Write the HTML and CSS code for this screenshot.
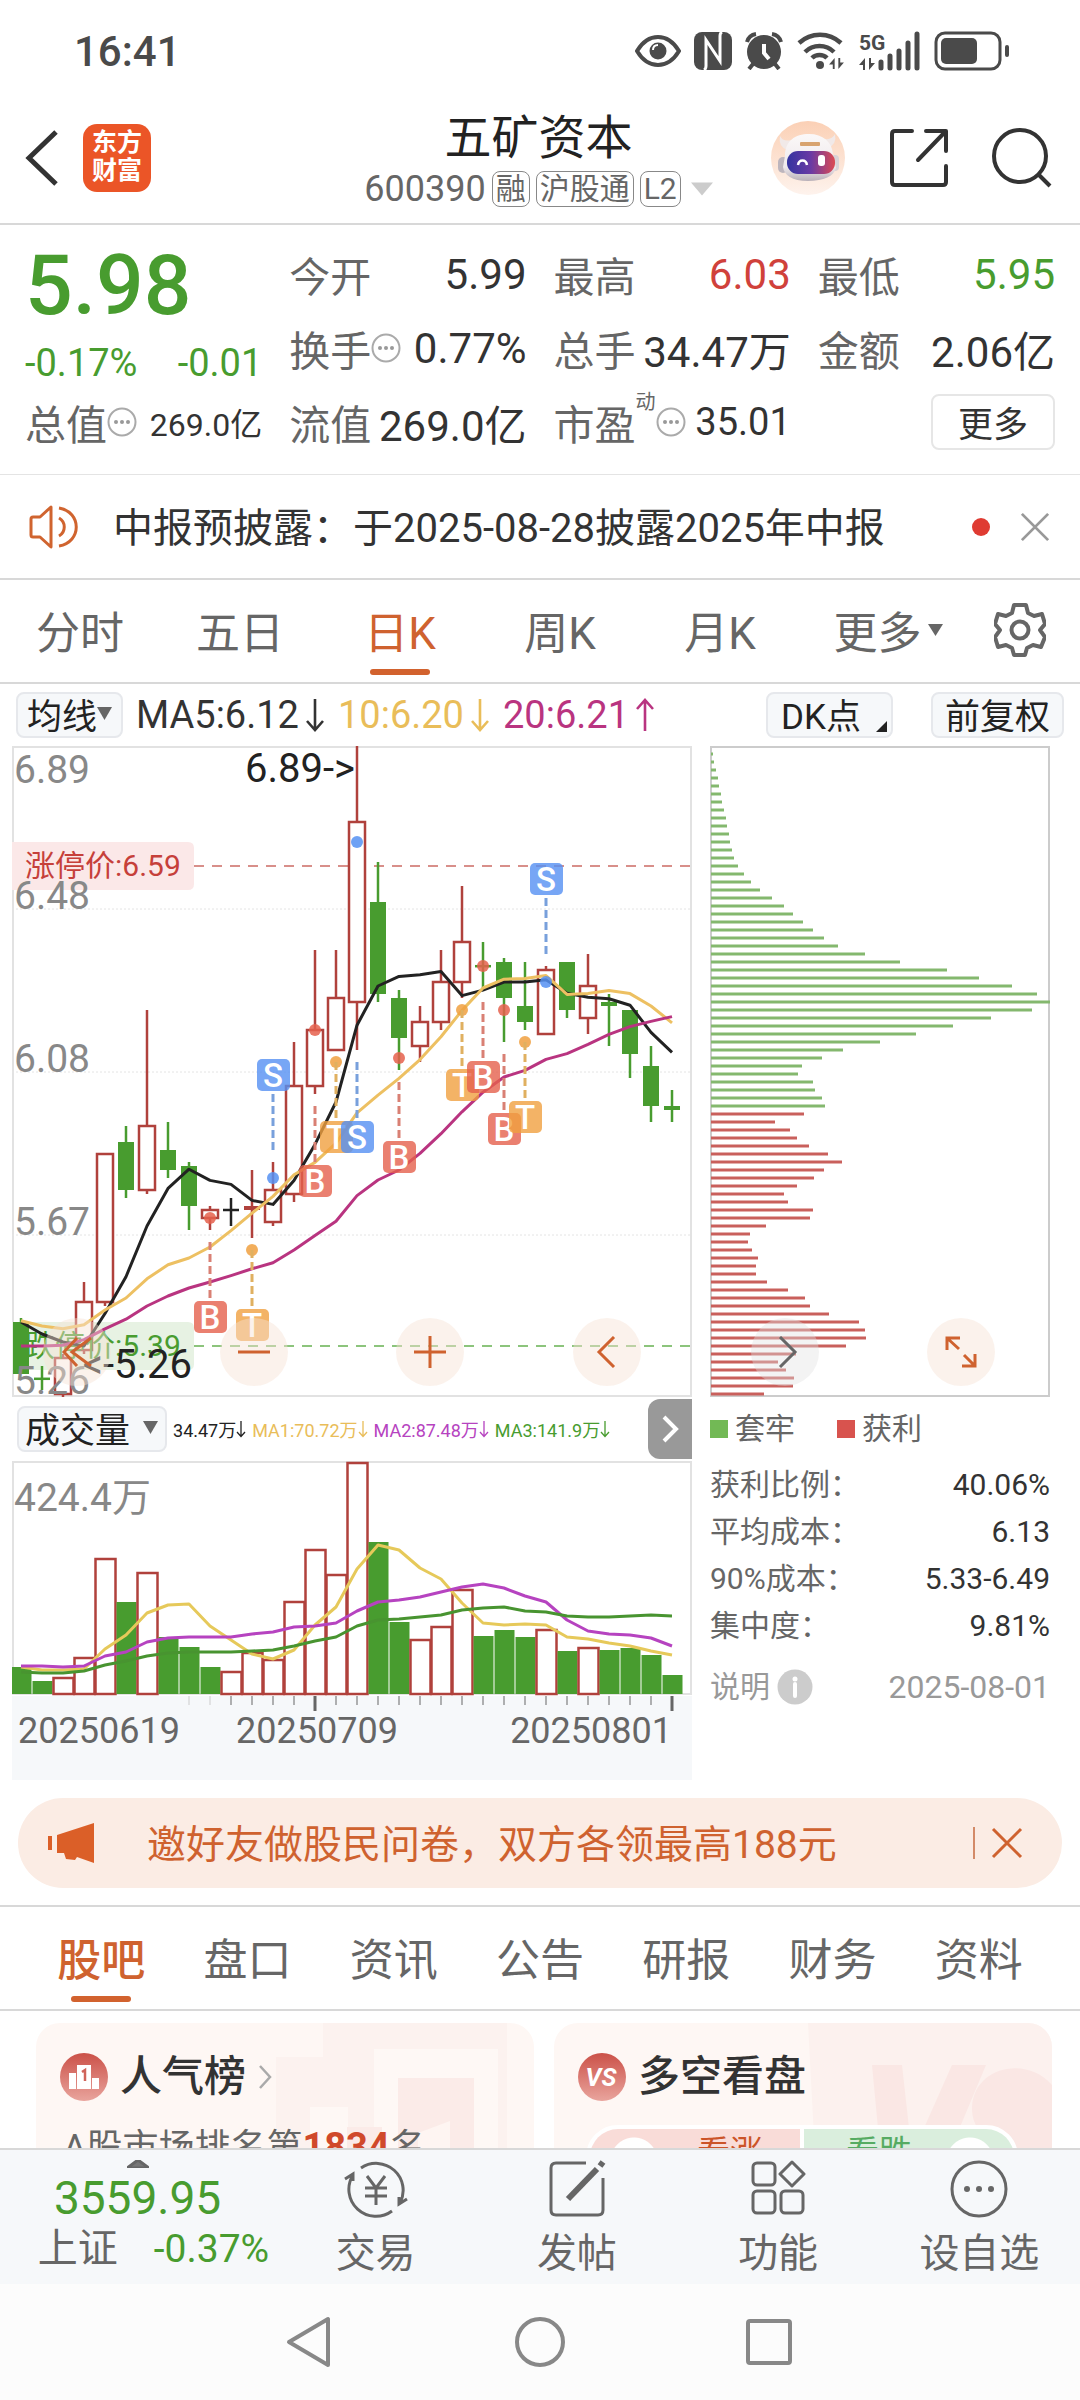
FILE: index.html
```html
<!DOCTYPE html>
<html lang="zh-CN">
<head>
  <meta charset="UTF-8" />
  <meta name="viewport" content="width=device-width, initial-scale=1" />
  <title>五矿资本 600390</title>
  <link rel="stylesheet" href="styles.css">
</head>
<body>

<svg class="defs" width="0" height="0" aria-hidden="true">
  <symbol id="dots" viewBox="0 0 30 30">
    <circle cx="15" cy="15" r="13.5" fill="none" stroke="#aaa" stroke-width="2" />
    <g fill="#999"><circle cx="9" cy="15" r="2" /><circle cx="15" cy="15" r="2" /><circle cx="21" cy="15" r="2" /></g>
  </symbol>
  <symbol id="down" viewBox="0 0 20 34">
    <path d="M10 1v31M2 23l8 9 8-9" fill="none" stroke="currentColor" stroke-width="2.6" />
  </symbol>
  <symbol id="up" viewBox="0 0 20 34">
    <path d="M10 33V2M2 11l8-9 8 9" fill="none" stroke="currentColor" stroke-width="2.6" />
  </symbol>
  <symbol id="close" viewBox="0 0 32 32">
    <path d="M2 2l28 28M30 2L2 30" fill="none" stroke="currentColor" stroke-width="3" />
  </symbol>
  <symbol id="updown" viewBox="0 0 16 14">
    <path d="M6 13V1L0 8h4v5zM10 1v12l6-7h-4V1z" fill="#4a4a4a" />
  </symbol>
</svg>

<div class="screen">

  <!-- Phone status bar -->
  <div class="status">
    <span class="clock">16:41</span>
    <div class="status-icons">
      <svg width="46" height="32" viewBox="0 0 46 32">
        <path d="M2 16C8 6 15 2 23 2s15 4 21 14c-6 10-13 14-21 14S8 26 2 16z" fill="none" stroke="#4a4a4a" stroke-width="4" />
        <circle cx="23" cy="16" r="8.5" fill="#4a4a4a" />
        <path d="M18 15c0-3 2-5 5-5" stroke="#fff" stroke-width="2" fill="none" />
      </svg>
      <svg width="38" height="38" viewBox="0 0 38 38">
        <rect width="38" height="38" rx="8" fill="#4a4a4a" />
        <path d="M10 38c2-1 2-2 2-4V8l14 21V8M28 0c-2 1-2 2-2 4v6M12 12v22M26 29L12 8" fill="none" stroke="#fff" stroke-width="3" />
      </svg>
      <svg width="38" height="38" viewBox="0 0 38 38">
        <circle cx="19" cy="20" r="17" fill="#4a4a4a" />
        <path d="M2 10q2-7 9-8M36 10q-2-7-9-8M8 32l-4 5M30 32l4 5" fill="none" stroke="#4a4a4a" stroke-width="4" />
        <path d="M19 12v9l5 6" fill="none" stroke="#fff" stroke-width="4" />
      </svg>
      <svg width="50" height="38" viewBox="0 0 50 38">
        <path d="M3 11c12-11 30-11 42 0M9 20c8-8 21-8 29 0M16 26c4-4 11-4 15 0" fill="none" stroke="#4a4a4a" stroke-width="4.5" />
        <circle cx="24" cy="33" r="4" fill="#4a4a4a" />
        <use href="#updown" x="33" y="25" width="15" height="13" />
      </svg>
      <svg width="62" height="40" viewBox="0 0 62 40">
        <text x="0" y="19" class="net">5G</text>
        <use href="#updown" x="0" y="26" width="16" height="14" />
        <path d="M22 37v-6M31 37V25M40 37V20M49 37V12M58 37V3" stroke="#4a4a4a" stroke-width="5" stroke-linecap="round" />
      </svg>
      <svg width="76" height="40" viewBox="0 0 76 40">
        <rect x="2" y="2" width="64" height="36" rx="9" fill="none" stroke="#4a4a4a" stroke-width="3" />
        <rect x="7" y="7" width="36" height="26" rx="5" fill="#4a4a4a" />
        <path d="M73 16v8" stroke="#4a4a4a" stroke-width="4" stroke-linecap="round" />
      </svg>
    </div>
  </div>

  <header class="header">
    <div class="header-left">
      <button class="icon-btn" aria-label="返回">
        <svg width="34" height="56" viewBox="0 0 34 56"><path d="M31 2L4 28l27 26" fill="none" stroke="#333" stroke-width="5" /></svg>
      </button>
      <a class="logo" href="#">东方<br />财富</a>
    </div>
    <div class="title">
      <h1>五矿资本</h1>
      <div class="code">600390 <span class="tag">融</span> <span class="tag">沪股通</span> <span class="tag">L2</span>
        <svg width="22" height="14" viewBox="0 0 24 14"><path d="M0 0h24L12 14z" fill="#ccc" /></svg>
      </div>
    </div>
    <div class="header-right">
      <button class="icon-btn" aria-label="智能助手">
        <svg width="76" height="76" viewBox="0 0 76 76">
          <defs>
            <linearGradient id="halo" x1="0" y1="0" x2="0" y2="1"><stop offset="0" stop-color="#fbd0b5" /><stop offset="1" stop-color="#fef3ed" /></linearGradient>
            <linearGradient id="shell" x1="0" y1="0" x2="0" y2="1"><stop offset="0" stop-color="#fbf8f8" /><stop offset=".7" stop-color="#efeaed" /><stop offset="1" stop-color="#b9b0b8" /></linearGradient>
            <linearGradient id="visor"><stop offset="0" stop-color="#3434a0" /><stop offset=".5" stop-color="#6a3aa4" /><stop offset="1" stop-color="#dc4a52" /></linearGradient>
          </defs>
          <circle cx="38" cy="38" r="37" fill="url(#halo)" />
          <path d="M17 30q-9-4-7-14 3 6 11 4zM58 28q9-4 7-14-3 6-10 5z" fill="#f1e9e8" />
          <rect x="8" y="37" width="10" height="16" rx="5" fill="#bdb5bd" />
          <rect x="60" y="35" width="9" height="16" rx="4" fill="#d9d2d6" />
          <path d="M15 36c0-15 10-22 24-22s23 8 24 20l3 14c-2 8-12 13-28 13S14 55 13 47z" fill="url(#shell)" />
          <rect x="17" y="31" width="48" height="23" rx="11" fill="url(#visor)" />
          <rect x="30" y="22" width="20" height="4" rx="1" fill="#d8a36f" />
          <path d="M28 45c1-6 8-6 9 0" fill="none" stroke="#fff" stroke-width="2.5" />
          <rect x="48" y="35" width="7" height="11" rx="3" fill="#fff" />
        </svg>
      </button>
      <button class="icon-btn" aria-label="分享">
        <svg width="60" height="60" viewBox="0 0 60 60"><path d="M23 3H6Q3 3 3 6v48q0 3 3 3h48q3 0 3-3V38M37 3h20v20M56 4L29 32" fill="none" stroke="#333" stroke-width="4" stroke-linejoin="round" stroke-linecap="round" /></svg>
      </button>
      <button class="icon-btn" aria-label="搜索">
        <svg width="60" height="60" viewBox="0 0 60 60"><circle cx="28" cy="28" r="26" fill="none" stroke="#333" stroke-width="4" /><path d="M46 46l12 12" stroke="#333" stroke-width="4" /></svg>
      </button>
    </div>
  </header>

  <main class="content">

    <!-- Quote numbers -->
    <section class="quote">
      <div class="price">
        <strong>5.98</strong>
        <div class="change"><span>-0.17%</span><span>-0.01</span></div>
      </div>
      <div class="cell"><span>今开</span><b>5.99</b></div>
      <div class="cell"><span>最高</span><b class="red">6.03</b></div>
      <div class="cell"><span>最低</span><b class="green">5.95</b></div>
      <div class="cell"><span>换手<svg class="hint"><use href="#dots" /></svg></span><b>0.77%</b></div>
      <div class="cell"><span>总手</span><b>34.47万</b></div>
      <div class="cell"><span>金额</span><b>2.06亿</b></div>
      <div class="cell"><span>总值<svg class="hint"><use href="#dots" /></svg></span><b class="small">269.0亿</b></div>
      <div class="cell"><span>流值</span><b>269.0亿</b></div>
      <div class="cell"><span>市盈<sup>动</sup><svg class="hint"><use href="#dots" /></svg></span><b class="mid">35.01</b></div>
      <div class="cell end"><button class="more">更多</button></div>
    </section>

    <section class="notice">
      <svg width="52" height="44" viewBox="0 0 52 44">
        <path d="M22 2L11 12H4q-2 0-2 2v16q0 2 2 2h7l11 10z" fill="none" stroke="#d0642f" stroke-width="3" stroke-linejoin="round" />
        <path d="M30 13c7 4 7 14 0 18M30 3c23 4 23 34 0 38" fill="none" stroke="#d0642f" stroke-width="3" />
      </svg>
      <a href="#">中报预披露：于2025-08-28披露2025年中报</a>
      <i class="dot"></i>
      <button class="icon-btn grey" aria-label="关闭公告"><svg width="30" height="30"><use href="#close" /></svg></button>
    </section>

    <nav class="period">
      <button>分时</button>
      <button>五日</button>
      <button class="active">日K</button>
      <button>周K</button>
      <button>月K</button>
      <button class="drop">更多<svg width="15" height="12" viewBox="0 0 15 12"><path d="M0 0h15L7.500 12z" fill="#666" /></svg></button>
      <button aria-label="设置">
        <svg width="52" height="54" viewBox="0 0 52 54">
          <path d="M20 2h12l2 8 6 3 8-2 3 10-5 6 5 7-4 10-8-2-6 3-2 7H20l-2-7-6-3-8 2L1 34l5-7-5-6 3-10 8 2 6-3z" fill="none" stroke="#666" stroke-width="4" stroke-linejoin="round" />
          <circle cx="26" cy="27" r="8.500" fill="none" stroke="#666" stroke-width="4" />
        </svg>
      </button>
    </nav>

    <div class="indicator">
      <button class="chip">均线<svg width="15" height="13" viewBox="0 0 15 13"><path d="M0 0h15L7.500 13z" fill="#666" /></svg></button>
      <span>MA5:6.12<svg class="arrow"><use href="#down" /></svg></span>
      <span class="yellow">10:6.20<svg class="arrow"><use href="#down" /></svg></span>
      <span class="magenta">20:6.21<svg class="arrow"><use href="#up" /></svg></span>
      <button class="chip push">DK点<svg class="corner" width="11" height="11" viewBox="0 0 11 11"><path d="M11 0v11H0z" fill="#222" /></svg></button>
      <button class="chip gap">前复权</button>
    </div>

    <section class="charts">
      <div class="left">
        <div class="plot">
          <svg id="kline" viewBox="0 0 680 651"></svg>
          <div class="tools">
            <button aria-label="最早"><svg viewBox="0 0 32 32"><path d="M16 2L3 16l13 14M30 2L11 16l19 14" /></svg></button>
            <button aria-label="缩小"><svg viewBox="0 0 32 32"><path d="M0 16h32" /></svg></button>
            <button aria-label="放大"><svg viewBox="0 0 32 32"><path d="M0 16h32M16 0v32" /></svg></button>
            <button aria-label="向左"><svg viewBox="0 0 32 32"><path d="M23 1L8 16l15 15" /></svg></button>
          </div>
        </div>
        <div class="volume-bar">
          <button class="chip wide">成交量<svg width="15" height="13" viewBox="0 0 15 13"><path d="M0 0h15L7.500 13z" fill="#666" /></svg></button>
          <span>34.47万<svg class="arrow"><use href="#down" /></svg></span>
          <span class="yellow">MA1:70.72万<svg class="arrow"><use href="#down" /></svg></span>
          <span class="purple">MA2:87.48万<svg class="arrow"><use href="#down" /></svg></span>
          <span class="green">MA3:141.9万<svg class="arrow"><use href="#down" /></svg></span>
          <button class="fold" aria-label="收起"><svg width="18" height="28" viewBox="0 0 18 28"><path d="M3 2l12 12L3 26" fill="none" stroke="#fff" stroke-width="4" /></svg></button>
        </div>
        <svg id="volume" viewBox="0 0 680 251"></svg>
        <div class="dates"><span>20250619</span><span>20250709</span><span>20250801</span></div>
      </div>

      <div class="right">
        <div class="plot">
          <svg id="chips" viewBox="0 0 340 651"></svg>
          <div class="tools">
            <button class="dim" aria-label="向右"><svg viewBox="0 0 32 32"><path d="M11 1l15 15-15 15" /></svg></button>
            <button aria-label="全屏"><svg viewBox="0 0 32 32"><path d="M2 14V2h13M2 2l12 11M30 18v12H17M30 30L19 19" /></svg></button>
          </div>
        </div>
        <div class="legend"><span><i class="sq lose"></i>套牢</span><span><i class="sq win"></i>获利</span></div>
        <dl class="stats">
          <div><dt>获利比例：</dt><dd>40.06%</dd></div>
          <div><dt>平均成本：</dt><dd>6.13</dd></div>
          <div><dt>90%成本：</dt><dd>5.33-6.49</dd></div>
          <div><dt>集中度：</dt><dd>9.81%</dd></div>
        </dl>
        <div class="explain">
          <a href="#">说明<svg width="36" height="36" viewBox="0 0 36 36"><circle cx="18" cy="18" r="17.500" fill="#ccc" /><circle cx="18" cy="10" r="2.500" fill="#fff" /><path d="M18 15v12" stroke="#fff" stroke-width="4" stroke-linecap="round" /></svg></a>
          <span>2025-08-01</span>
        </div>
      </div>
    </section>

    <section class="banner">
      <svg width="46" height="40" viewBox="0 0 46 40"><path d="M0 13h4v14H0zM9 12L46 0v40l-17-6-2 3-9-1-2-6H9z" fill="#db5f28" /></svg>
      <a href="#">邀好友做股民问卷，双方各领最高188元</a>
      <button class="icon-btn" aria-label="关闭活动"><svg width="32" height="32"><use href="#close" /></svg></button>
    </section>

    <nav class="tabs">
      <button class="active">股吧</button>
      <button>盘口</button>
      <button>资讯</button>
      <button>公告</button>
      <button>研报</button>
      <button>财务</button>
      <button>资料</button>
    </nav>

    <section class="cards">
      <article class="card">
        <svg class="deco" viewBox="0 0 258 190" width="258" height="190"><path d="M0 34h47V0h184v190H0z" fill="#fcf2ef" /><path d="M98 26h124v164H98zM34 84h38v106H34z" fill="#fef8f5" /><path d="M122 55h76v135h-76zM71 104h35v86H71z" fill="#fbebe8" /><path d="M142 110l32-12v92h-22v-60l-10 6z" fill="#fef5f2" /></svg>
        <h2>
          <svg width="48" height="48" viewBox="0 0 48 48"><circle cx="24" cy="24" r="24" fill="url(#ball)" /><path d="M9 20h7v16H9zM17 12h14v24H17zM32 25h7v11h-7z" fill="#fff" /><path d="M22 19l3-2v11" stroke="#d0645a" stroke-width="2.500" fill="none" /></svg>
          人气榜
          <svg width="14" height="24" viewBox="0 0 14 24"><path d="M2 1l10 11L2 23" fill="none" stroke="#aaa" stroke-width="2.500" /></svg>
        </h2>
        <p>A股市场排名第<b>1834</b>名</p>
      </article>
      <article class="card">
        <svg class="deco" viewBox="0 0 244 190" width="244" height="190"><path d="M0 0h244v190H10z" fill="#fcf1ee" /><path d="M64 42h30l10 90 40-90h34l-62 148H78zM244 62c-26-30-78-18-80 22-1 36 40 38 36 60-3 14-22 16-40 4l-12 42h96z" fill="#fae7e4" /></svg>
        <h2>
          <svg width="48" height="48" viewBox="0 0 48 48">
            <defs><linearGradient id="ball" x1="0" y1="0" x2="0" y2="1"><stop offset="0" stop-color="#cb5148" /><stop offset="1" stop-color="#e9a49d" /></linearGradient></defs>
            <circle cx="24" cy="24" r="24" fill="url(#ball)" /><text x="23" y="33" text-anchor="middle" class="vs">VS</text>
          </svg>
          多空看盘
        </h2>
        <div class="vote"><button class="bull">看涨</button><button class="bear">看跌</button></div>
      </article>
    </section>
  </main>

  <!-- App bottom bar -->
  <footer class="bottom">
    <a class="index" href="#">
      <svg width="22" height="8" viewBox="0 0 22 8"><path d="M11 0l11 8H0z" fill="#777" /></svg>
      <strong>3559.95</strong>
      <div><span>上证</span><em>-0.37%</em></div>
    </a>
    <a href="#">
      <svg width="66" height="58" viewBox="0 0 66 58"><path d="M18 8A27 27 0 0 1 57 43M49 51A27 27 0 0 1 10 15M2 19l8-5v7M64 39l-8 5v-7M24 16l9 12 9-12M33 28v17M22 28h22M22 36h22" /></svg>
      交易
    </a>
    <a href="#">
      <svg width="58" height="58" viewBox="0 0 58 58"><path d="M38 3H8Q3 3 3 8v42q0 5 5 5h42q5 0 5-5V18" /><path d="M20 39L49 9" stroke-width="6" /><path d="M52 6l3-4" stroke-width="6" /></svg>
      发帖
    </a>
    <a href="#">
      <svg width="56" height="56" viewBox="0 0 56 56"><rect x="3" y="3" width="22" height="22" rx="4" /><rect x="3" y="31" width="22" height="22" rx="4" /><rect x="31" y="31" width="22" height="22" rx="4" /><path d="M42 2l12 12-12 12-12-12z" stroke-linejoin="round" /></svg>
      功能
    </a>
    <a href="#">
      <svg width="58" height="58" viewBox="0 0 58 58"><circle cx="29" cy="29" r="27" /><g fill="#666" stroke="none"><circle cx="17" cy="29" r="3" /><circle cx="29" cy="29" r="3" /><circle cx="41" cy="29" r="3" /></g></svg>
      设自选
    </a>
  </footer>

  <div class="sysnav">
    <button class="icon-btn" aria-label="系统返回"><svg width="50" height="54" viewBox="0 0 50 54"><path d="M44 4v46L5 27z" /></svg></button>
    <button class="icon-btn" aria-label="主屏幕"><svg width="50" height="50" viewBox="0 0 50 50"><circle cx="25" cy="25" r="23" /></svg></button>
    <button class="icon-btn" aria-label="最近任务"><svg width="46" height="46" viewBox="0 0 46 46"><rect x="2" y="2" width="42" height="42" rx="2" /></svg></button>
  </div>
</div>

<script src="script.js"></script>
</body>
</html>
```
FILE: styles.css
```css
* {
  box-sizing: border-box;
}

body {
  margin: 0;
  font-family: Roboto, "Noto Sans CJK SC", sans-serif;
  color: #333;
  background: #fff;
}

button {
  font: inherit;
  color: inherit;
  background: none;
  border: none;
  padding: 0;
}

a {
  color: inherit;
  text-decoration: none;
}

svg {
  display: block;
  flex: none;
}

.defs {
  position: absolute;
}

.screen {
  height: 100vh;
  display: flex;
  flex-direction: column;
}

.red { color: #d0413b; }
.green { color: #489c2f; }
.yellow { color: #e9bd59; }
.magenta { color: #b93480; }
.purple { color: #b643c0; }
.grey { color: #999; }

/* status bar */
.status {
  display: flex;
  justify-content: space-between;
  align-items: center;
  height: 102px;
  padding: 0 70px 0 74px;
}

.clock {
  font-size: 42px;
  font-weight: 500;
  color: #4a4a4a;
}

.status-icons {
  display: flex;
  align-items: center;
  gap: 13px;
}

.net {
  font-size: 21px;
  font-weight: bold;
  fill: #4a4a4a;
}

/* header */
.header {
  display: grid;
  grid-template-columns: 1fr auto 1fr;
  align-items: center;
  height: 123px;
  padding: 0 28px 9px 25px;
  border-bottom: 2px solid #d8d8d8;
}

.header-left,
.header-right {
  display: flex;
  align-items: center;
}

.header-left {
  gap: 24px;
}

.header-right {
  justify-content: flex-end;
  gap: 43px;
}

.logo {
  width: 68px;
  height: 68px;
  padding-top: 5px;
  border-radius: 14px;
  background: #eb5527;
  color: #fff;
  font-size: 25px;
  font-weight: bold;
  line-height: 28px;
  text-align: center;
}

.title {
  text-align: center;
}

h1 {
  margin: 0;
  font-size: 47px;
  font-weight: 400;
  line-height: 62px;
  color: #222;
}

.code {
  display: flex;
  align-items: center;
  gap: 6px;
  font-size: 36px;
  line-height: 40px;
  color: #666;
}

.code svg {
  margin-left: 4px;
}

.tag {
  padding: 0 3px;
  border: 1px solid #888;
  border-radius: 8px;
  font-size: 30px;
  line-height: 34px;
}

/* quote */
.quote {
  display: grid;
  grid-template-columns: repeat(4, 1fr);
  grid-template-rows: repeat(3, 74px);
  column-gap: 27px;
  padding: 12px 25px 15px;
  border-bottom: 1px solid #e4e4e4;
}

.price {
  grid-row: span 2;
  color: #489c2f;
}

.price strong {
  display: block;
  font-size: 84px;
  font-weight: 500;
  line-height: 98px;
}

.change {
  display: flex;
  justify-content: space-between;
  font-size: 38px;
  line-height: 56px;
}

.cell {
  display: flex;
  justify-content: space-between;
  align-items: center;
  font-size: 41px;
  white-space: nowrap;
}

.cell span {
  display: flex;
  align-items: center;
  color: #666;
}

.cell b {
  font-size: 42px;
  font-weight: 400;
}

.cell .mid {
  font-size: 38px;
}

.cell .small {
  font-size: 32px;
}

.cell sup {
  align-self: flex-start;
  font-size: 20px;
  line-height: 20px;
}

.cell.end {
  justify-content: flex-end;
}

.hint {
  width: 30px;
  height: 30px;
}

.more {
  width: 124px;
  height: 56px;
  padding-bottom: 4px;
  border: 2px solid #e6e6e6;
  border-radius: 8px;
  font-size: 35px;
}

/* notice */
.notice {
  display: flex;
  align-items: center;
  height: 105px;
  padding: 0 30px 0 29px;
  border-bottom: 2px solid #d8d8d8;
}

.notice a {
  flex: 1;
  padding: 0 0 4px 32px;
  font-size: 40px;
}

.dot {
  width: 18px;
  height: 18px;
  margin-right: 30px;
  border-radius: 50%;
  background: #df3b32;
}

/* tab rows */
.period,
.tabs {
  display: grid;
  border-bottom: 2px solid #d8d8d8;
  font-size: 44px;
  color: #666;
}

.period {
  grid-template-columns: repeat(6, 1fr) 120px;
  height: 104px;
}

.tabs {
  grid-template-columns: repeat(7, 1fr);
  height: 106px;
  padding: 0 28px;
  border-top: 2px solid #d8d8d8;
}

.period button,
.tabs button {
  position: relative;
  display: flex;
  align-items: center;
  justify-content: center;
  gap: 6px;
  padding-bottom: 3px;
}

.period .drop {
  padding-left: 16px;
}

.active {
  color: #cf622f;
}

.tabs .active {
  font-weight: 500;
}

.active::after {
  content: "";
  position: absolute;
  bottom: 7px;
  width: 60px;
  height: 6px;
  border-radius: 3px;
  background: #d2622e;
}

/* indicator row */
.indicator {
  display: flex;
  align-items: center;
  height: 62px;
  padding: 0 16px;
  font-size: 38px;
}

.indicator span,
.volume-bar span {
  display: flex;
  align-items: center;
}

.indicator span {
  gap: 6px;
  margin-left: 13px;
}

.arrow {
  width: 20px;
  height: 34px;
}

.chip {
  display: flex;
  align-items: center;
  height: 46px;
  padding: 0 9px 4px;
  border: 2px solid #e6e8ec;
  border-radius: 8px;
  background: #f6f8fa;
  color: #222;
  font-size: 35px;
}

.chip.push {
  margin-left: auto;
  padding-right: 4px;
  padding-left: 13px;
  gap: 15px;
}

.chip.gap {
  margin-left: 38px;
  padding-right: 12px;
  padding-left: 12px;
}

.chip.wide {
  gap: 13px;
  padding-right: 7px;
  padding-left: 6px;
}

.corner {
  align-self: flex-end;
}

/* charts */
.charts {
  display: grid;
  grid-template-columns: 2fr 1fr;
  column-gap: 18px;
  padding: 0 30px 0 12px;
}

.plot {
  position: relative;
}

.tools {
  position: absolute;
  left: 31px;
  right: 51px;
  bottom: 11px;
  display: flex;
  justify-content: space-between;
}

.right .tools {
  left: 41px;
  right: 55px;
}

.tools button {
  display: flex;
  align-items: center;
  justify-content: center;
  width: 68px;
  height: 68px;
  border-radius: 50%;
  background: rgba(246, 226, 212, 0.45);
}

.tools .dim {
  background: rgba(225, 225, 225, 0.4);
}

.tools svg {
  width: 32px;
  height: 32px;
  fill: none;
  stroke: #cf622f;
  stroke-width: 3;
}

.tools .dim svg {
  stroke: #666;
}

.axis {
  font-size: 39px;
  fill: #888;
}

.mark {
  font-size: 40px;
  fill: #222;
}

.limit {
  font-size: 30px;
}

.badge {
  font-size: 33px;
  font-weight: 500;
  fill: #fff;
  text-anchor: middle;
}

.volume-bar {
  display: flex;
  align-items: center;
  gap: 6px;
  height: 64px;
  padding-left: 5px;
  font-size: 18px;
  color: #222;
}

.volume-bar .arrow {
  width: 10px;
  height: 26px;
}

.fold {
  display: flex;
  align-items: center;
  justify-content: center;
  width: 44px;
  height: 60px;
  margin-left: auto;
  border-radius: 12px 0 0 12px;
  background: #999;
}

.dates {
  display: grid;
  grid-template-columns: repeat(3, 1fr);
  height: 68px;
  padding: 0 20px 0 6px;
  background: #f6f8fa;
  color: #666;
  font-size: 36px;
  line-height: 38px;
}

.dates span:last-child {
  text-align: right;
}

.right {
  font-size: 30px;
  color: #666;
}

.legend {
  display: flex;
  gap: 42px;
  height: 64px;
  line-height: 60px;
}

.legend span {
  display: flex;
  align-items: center;
  gap: 7px;
}

.sq {
  width: 18px;
  height: 18px;
}

.lose { background: #72b955; }
.win { background: #d8534e; }

.stats {
  margin: 0;
  line-height: 47px;
}

.stats div,
.explain {
  display: flex;
  justify-content: space-between;
}

.stats dd {
  margin: 0;
  color: #333;
}

.explain {
  align-items: center;
  margin-top: 16px;
  color: #999;
  line-height: 44px;
}

.explain a {
  display: flex;
  align-items: center;
  gap: 7px;
}

.explain span {
  font-size: 32px;
}

/* banner */
.banner {
  display: flex;
  align-items: center;
  height: 90px;
  margin: 18px 18px 17px;
  padding: 0 39px 0 30px;
  border-radius: 45px;
  background: #fbece4;
  color: #cf622f;
}

.banner a {
  flex: 1;
  padding: 0 0 4px 53px;
  font-size: 39px;
}

.banner button {
  padding-left: 16px;
  border-left: 2px solid #d38a68;
}

/* cards */
.cards {
  display: grid;
  grid-template-columns: 1fr 1fr;
  gap: 20px;
  padding: 12px 28px 0 36px;
}

.card {
  position: relative;
  height: 190px;
  padding: 22px 24px 0;
  border-radius: 24px;
  background: #fef7f4;
  overflow: hidden;
}

.deco {
  position: absolute;
  top: 0;
  right: 0;
}

.vs {
  font-size: 25px;
  font-style: italic;
  font-weight: bold;
  fill: #fff;
}

.card h2 {
  position: relative;
  display: flex;
  align-items: center;
  gap: 12px;
  margin: 0;
  font-size: 42px;
  font-weight: 500;
  line-height: 64px;
}

.card p {
  position: relative;
  margin: 16px 0 0 3px;
  font-size: 36px;
  line-height: 44px;
  color: #666;
}

.card p b {
  font-size: 38px;
  color: #d0492b;
}

.vote {
  position: relative;
  display: grid;
  grid-template-columns: 1fr 1fr;
  gap: 4px;
  height: 64px;
  margin: 16px 10px 0 8px;
  border: 4px solid #fff;
  border-radius: 36px;
  background: #fff;
  overflow: hidden;
  font-size: 33px;
  line-height: 48px;
}

.vote button {
  padding-bottom: 8px;
}

.vote .bull {
  padding-left: 70px;
  background: radial-gradient(circle at 44px 32px, #fff 23px, #f9dcd8 24px);
  color: #cb5428;
}

.vote .bear {
  padding-right: 60px;
  background: radial-gradient(circle at calc(100% - 44px) 32px, #fff 23px, #daeedd 24px);
  color: #56ab62;
}

.content {
  flex: 1;
  min-height: 0;
  overflow: hidden;
}

/* bottom bar */
.bottom {
  display: grid;
  grid-template-columns: 275px repeat(4, 1fr);
  height: 136px;
  border-top: 2px solid #d8d8d8;
  background: #f6f8fa;
  color: #666;
  font-size: 40px;
  line-height: 48px;
}

.bottom a {
  display: flex;
  flex-direction: column;
  align-items: center;
  justify-content: space-between;
  padding: 10px 0 6px;
}

.bottom a > svg {
  fill: none;
  stroke: #666;
  stroke-width: 3;
}

.bottom .index {
  justify-content: flex-start;
}

.index strong {
  margin-top: 4px;
  font-size: 46px;
  font-weight: 400;
  line-height: 53px;
  color: #489c2f;
}

.index div {
  display: flex;
  gap: 36px;
  padding-left: 32px;
}

.index em {
  font-size: 39px;
  font-style: normal;
  color: #489c2f;
}

/* system navigation */
.sysnav {
  display: flex;
  justify-content: center;
  gap: 181px;
  height: 116px;
  padding-right: 4px;
  background: #fcfcfc;
}

.sysnav svg {
  fill: none;
  stroke: #888;
  stroke-width: 4;
  stroke-linejoin: round;
}
```
FILE: script.js
```js
const RED = "#b0413c";
const GREEN = "#489c2f";
const STEP = 21;

// open, high, low, close
const days = [
  [5.45, 5.46, 5.32, 5.32], [5.31, 5.34, 5.28, 5.306], [5.27, 5.37, 5.26, 5.36], [5.38, 5.55, 5.37, 5.50],
  [5.50, 5.87, 5.49, 5.87], [5.90, 5.94, 5.76, 5.78], [5.78, 6.23, 5.77, 5.94], [5.88, 5.95, 5.81, 5.83],
  [5.84, 5.85, 5.68, 5.74], [5.71, 5.74, 5.68, 5.73], [5.73, 5.76, 5.69, 5.73], [5.73, 5.83, 5.66, 5.74],
  [5.70, 5.85, 5.69, 5.78], [5.77, 6.15, 5.75, 6.04], [6.04, 6.38, 6.02, 6.18], [6.13, 6.38, 6.13, 6.26],
  [6.25, 6.89, 6.13, 6.70], [6.50, 6.60, 6.25, 6.27], [6.26, 6.28, 6.08, 6.16], [6.14, 6.24, 6.10, 6.20],
  [6.20, 6.38, 6.18, 6.30], [6.30, 6.54, 6.26, 6.40], [6.34, 6.40, 6.28, 6.339], [6.35, 6.36, 6.15, 6.26],
  [6.24, 6.35, 6.18, 6.20], [6.17, 6.34, 6.17, 6.33], [6.35, 6.35, 6.21, 6.23], [6.21, 6.37, 6.17, 6.29],
  [6.25, 6.27, 6.14, 6.24], [6.23, 6.23, 6.06, 6.12], [6.09, 6.14, 5.95, 5.99], [5.99, 6.03, 5.95, 5.98]
];

const ma5Start = [5.45, 5.42, 5.40, 5.39];
const ma10Start = [5.453, 5.44, 5.433, 5.443, 5.48, 5.51, 5.558, 5.593, 5.61];
const ma20Start = [5.39, 5.39, 5.392, 5.406, 5.433, 5.457, 5.49, 5.515, 5.535, 5.55,
  5.566, 5.583, 5.598, 5.63, 5.666, 5.702, 5.766, 5.805, 5.83];

// day, type, badge y, dot y
const trades = [
  [9, "B", 571, 472], [11, "T", 579, 504], [12, "S", 329, 432], [14, "B", 435, 284],
  [15, "T", 391, 316], [16, "S", 391, 96], [18, "B", 411, 312], [21, "T", 339, 264],
  [22, "B", 331, 220], [23, "B", 383, 264], [24, "T", 371, 296], [25, "S", 133, 236]
];
const tradeColors = {
  B: ["#e5604c", "#d98074"],
  T: ["#f0a040", "#e0b060"],
  S: ["#5590f2", "#78a0dc"]
};

const volumes = [27, 13, 17, 37, 136, 92, 122, 57, 47, 27, 23, 42, 35, 93, 145, 120,
  232, 152, 72, 55, 68, 105, 58, 64, 57, 65, 43, 47, 44, 46, 39, 19];
const volumeSigns = "ggrrrgrgggrrrrrrrggrrrgggrgrgggg";
const volumeLines = [
  ["#e6c95a", [206, 209, 209, 208, 188, 174, 152, 144, 143, 165, 179, 193, 198, 189, 164, 146, 108, 84, 89, 107, 118, 142, 162, 164, 163, 164, 176, 178, 182, 185, 190, 194]],
  ["#b643c0", [205, 205, 206, 205, 195, 191, 181, 177, 176, 176, 176, 173, 171, 166, 165, 162, 150, 141, 139, 136, 131, 126, 123, 127, 135, 141, 159, 170, 173, 174, 177, 185]],
  ["#489430", [211, 212, 212, 210, 204, 200, 195, 192, 191, 191, 191, 190, 189, 185, 180, 176, 165, 159, 158, 156, 154, 149, 147, 146, 150, 151, 155, 156, 156, 155, 154, 155]]
];

const losing = [2, 3, 5, 7, 8, 10, 11, 13, 15, 16, 18, 19, 21, 23, 27, 33, 40, 49, 61, 73, 82, 92, 102, 113, 127,
  154, 189, 236, 268, 301, 326, 339, 321, 280, 242, 205, 169, 132, 111, 91, 87, 102, 104, 111, 114];
const winning = [93, 64, 79, 86, 98, 117, 131, 113, 103, 86, 73, 77, 102, 99, 55, 39, 37, 41, 47, 45, 45, 56,
  77, 94, 99, 118, 148, 154, 155, 135, 85, 67, 75, 83, 82, 53];

const x = i => 9 + i * STEP;
const y = price => (6.89 - price) * 400;

function line(x1, y1, x2, y2, color, width, dash) {
  return `<path d="M${x1} ${y1}L${x2} ${y2}" stroke="${color}" stroke-width="${width}"${dash ? ` stroke-dasharray="${dash}"` : ""} />`;
}

function curve(points, color) {
  const list = points.map((v, i) => `${x(i)},${v.toFixed(1)}`).join(" ");
  return `<polyline points="${list}" fill="none" stroke="${color}" stroke-width="3" stroke-linejoin="round" />`;
}

function average(n, start) {
  return days.map((d, i) => {
    if (i < n - 1) return y(start[i]);
    const part = days.slice(i - n + 1, i + 1);
    return y(part.reduce((sum, p) => sum + p[3], 0) / n);
  });
}

function drawKline() {
  let out = `<rect x="1" y="1" width="678" height="649" fill="none" stroke="#e2e2e2" stroke-width="2" />`;
  [163, 326, 489].forEach(v => out += line(0, v, 680, v, "#e4e4e4", 1, "2 2"));
  out += line(182, 120, 680, 120, "#d88f8a", 2, "10 8");
  out += line(182, 600, 680, 600, "#8cc47c", 2, "10 8");
  out += `<path d="M0 96h176q6 0 6 6v36q0 6-6 6H0z" fill="#fbe8e8" /><text x="13" y="130" class="limit" fill="#c6403a">涨停价:6.59</text>`;
  out += `<path d="M0 576h176q6 0 6 6v36q0 6-6 6H0z" fill="#e7f2e3" />`;

  days.forEach(([open, high, low, close], i) => {
    const cx = x(i);
    const up = close >= open;
    const top = y(Math.max(open, close));
    const bottom = y(Math.min(open, close));
    const color = open === close ? "#222" : up ? RED : GREEN;
    out += line(cx, y(high), cx, top, color, 2.5) + line(cx, bottom, cx, y(low), color, 2.5);
    if (bottom - top < 5) {
      out += line(cx - 8, (top + bottom) / 2, cx + 8, (top + bottom) / 2, color, Math.max(2.5, bottom - top));
    } else if (up) {
      out += `<rect x="${cx - 8}" y="${top}" width="16" height="${bottom - top}" fill="#fff" stroke="${RED}" stroke-width="2.5" />`;
    } else {
      out += `<rect x="${cx - 8}" y="${top}" width="16" height="${bottom - top}" fill="${GREEN}" />`;
    }
  });

  out += `<text x="13" y="610" class="limit" fill="#489c2f">跌停价:5.39</text>`;
  out += curve(average(5, ma5Start), "#222");
  out += curve(average(10, ma10Start), "#edc062");
  out += curve(average(20, ma20Start), "#b93480");

  trades.forEach(([i, type, by, dy]) => {
    const cx = x(i);
    const [fill, dash] = tradeColors[type];
    const above = by < dy && type === "S";
    out += `<circle cx="${cx}" cy="${dy}" r="6" fill="${fill}" fill-opacity=".85" />`;
    out += line(cx, above ? by + 19 : by - 75, cx, above ? by + 75 : by - 19, dash, 3, "8 4");
    out += `<rect x="${cx - 16}" y="${by - 16}" width="33" height="32" rx="5" fill="${fill}" fill-opacity=".8" />`;
    out += `<text x="${cx}" y="${by + 12}" class="badge">${type}</text>`;
  });

  [["6.89", 37], ["6.48", 163], ["6.08", 326], ["5.67", 489], ["5.26", 648]].forEach(([t, v]) => {
    out += `<text x="2" y="${v}" class="axis">${t}</text>`;
  });
  out += `<text x="343" y="36" class="mark" text-anchor="end">6.89-&gt;</text>`;
  out += `<text x="180" y="632" class="mark" text-anchor="end">&lt;-5.26</text>`;
  document.getElementById("kline").innerHTML = out;
}

function drawVolume() {
  let out = `<rect x="1" y="1" width="678" height="232" fill="none" stroke="#e2e2e2" stroke-width="2" />`;
  out += `<rect y="235" width="680" height="16" fill="#f6f8fa" />`;
  out += `<text x="2" y="50" class="axis">424.4万</text>`;
  volumes.forEach((v, i) => {
    if (volumeSigns[i] === "r") {
      out += `<rect x="${x(i) - 9.5}" y="${234 - v}" width="20" height="${v - 1}" fill="#fff" stroke="${RED}" stroke-width="2.5" />`;
    } else {
      out += `<rect x="${x(i) - 9.5}" y="${233 - v}" width="20" height="${v}" fill="${GREEN}" />`;
    }
  });
  volumeLines.forEach(([color, points]) => out += curve(points, color));
  for (let i = 8; i < 32; i++) {
    const big = i === 14 || i === 31;
    out += line(x(i), 235, x(i), big ? 250 : 244, i < 10 ? "#ccc" : "#666", big ? 3 : 1);
  }
  document.getElementById("volume").innerHTML = out;
}

function drawChips() {
  let out = `<rect x="1" y="1" width="338" height="649" fill="none" stroke="#ccc" stroke-width="2" />`;
  losing.concat(winning).forEach((v, i) => {
    out += line(1, 8 + i * 8, 1 + v, 8 + i * 8, i < losing.length ? "#84b86e" : "#c9605c", 3);
  });
  document.getElementById("chips").innerHTML = out;
}

drawKline();
drawVolume();
drawChips();
```
